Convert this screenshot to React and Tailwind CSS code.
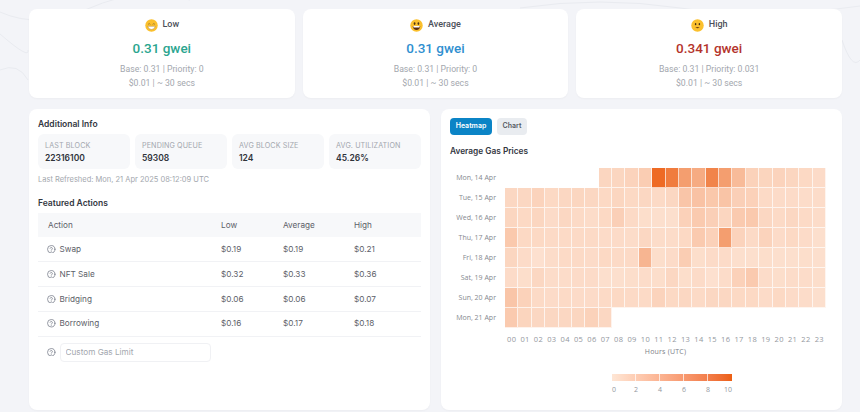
import React from "react";

const gasCards = [
  { id: "low", label: "Low", price: "0.31 gwei", color: "text-[#2ba58f]", base: "Base: 0.31 | Priority: 0" },
  { id: "avg", label: "Average", price: "0.31 gwei", color: "text-[#2f8fd0]", base: "Base: 0.31 | Priority: 0" },
  { id: "high", label: "High", price: "0.341 gwei", color: "text-[#b4342c]", base: "Base: 0.31 | Priority: 0.031" },
];

const stats = [
  ["LAST BLOCK", "22316100"],
  ["PENDING QUEUE", "59308"],
  ["AVG BLOCK SIZE", "124"],
  ["AVG. UTILIZATION", "45.26%"],
];

const actions = [
  ["Swap", "$0.19", "$0.19", "$0.21"],
  ["NFT Sale", "$0.32", "$0.33", "$0.36"],
  ["Bridging", "$0.06", "$0.06", "$0.07"],
  ["Borrowing", "$0.16", "$0.17", "$0.18"],
];

const days = ["Mon, 14 Apr", "Tue, 15 Apr", "Wed, 16 Apr", "Thu, 17 Apr", "Fri, 18 Apr", "Sat, 19 Apr", "Sun, 20 Apr", "Mon, 21 Apr"];

// null = no data for that hour
const heat = [
  [null, null, null, null, null, null, null, 1.7, 1.7, 1.9, 2.4, 10, 8.6, 6, 5, 8, 6, 3.8, 2, 1.8, 1.9, 1.7, 1.5, 1.3],
  [1.6, 1.6, 1.9, 1.5, 1.6, 1.7, 1.6, 1.5, 1.7, 1.5, 1.6, 1.4, 1.6, 3, 3.2, 2.8, 3.1, 2.2, 2.1, 1.4, 1.3, 1.3, 1.2, 1.2],
  [1.7, 1.5, 1.7, 1.3, 1.6, 1.4, 1.2, 1.5, 2.2, 1.4, 1.1, 1, 1, 2.1, 2.6, 2.2, 1.7, 2.6, 2.7, 1.6, 1.4, 1.6, 1.4, 1.2],
  [2.7, 1.5, 1.5, 1.4, 1.4, 1.4, 1.4, 1.3, 1.3, 1.2, 1.6, 1.2, 1.2, 1.5, 2.6, 2.1, 6, 1.9, 1.4, 1.9, 1.3, 1.5, 1.3, 1],
  [1.7, 1.3, 0.9, 1.2, 1.4, 1.4, 1.3, 1.5, 1.4, 1.4, 4.2, 1.1, 1.3, 2.4, 1.1, 1.3, 1.3, 1, 1, 1.1, 1, 1, 1.1, 1],
  [1.3, 1.1, 1.6, 1.2, 1.2, 1.3, 1.3, 1, 1, 1.1, 1.2, 1.1, 1.6, 1.1, 1.3, 0.9, 1.2, 2.1, 2.6, 1.2, 1.1, 1.2, 1.2, 1.1],
  [3, 2, 1.4, 1.3, 1.4, 1.3, 1.3, 1.4, 1.5, 1.4, 1.4, 1.9, 1.5, 1.6, 1.4, 1.6, 1.6, 1.5, 1.5, 1.3, 1.5, 1.3, 1.2, 1],
  [2.6, 1.8, 1.6, 1.6, 1.6, 1.7, 2, 1.6, null, null, null, null, null, null, null, null, null, null, null, null, null, null, null, null],
];

const hours = Array.from({ length: 24 }, (_, i) => String(i).padStart(2, "0"));

// white-ish peach up to deep orange, same ramp as the legend
function heatColor(v) {
  const t = v / 10;
  const r = Math.round(254 + (238 - 254) * t);
  const g = Math.round(236 + (106 - 236) * t);
  const b = Math.round(224 + (36 - 224) * t);
  return `rgb(${r},${g},${b})`;
}

function Face({ type }) {
  return (
    <svg viewBox="0 0 24 24" className="w-[13px] h-[13px] shrink-0">
      <circle cx="12" cy="12" r="11.5" fill="#fbc02d" />
      {type === "low" && (
        <>
          <path d="M5.5 10 Q8 7 10 10 M14 10 Q16 7 18.5 10" stroke="#8a6a30" strokeWidth="1.3" fill="none" />
          <path d="M5 13.5 H19 Q17 19.5 12 19.5 Q7 19.5 5 13.5Z" fill="#fff" stroke="#a07c3a" strokeWidth="0.8" />
        </>
      )}
      {type === "avg" && (
        <>
          <ellipse cx="8.5" cy="8.5" rx="1.6" ry="2.4" fill="#4a3214" />
          <ellipse cx="15.5" cy="8.5" rx="1.6" ry="2.4" fill="#4a3214" />
          <path d="M5 13 H19 Q18 20.5 12 20.5 Q6 20.5 5 13Z" fill="#5b2c0e" />
          <path d="M6 13 H18 L17.4 15.5 H6.6Z" fill="#fff" />
        </>
      )}
      {type === "high" && (
        <>
          <ellipse cx="8.5" cy="9.5" rx="1.4" ry="2" fill="#4a3214" />
          <ellipse cx="15.5" cy="9.5" rx="1.4" ry="2" fill="#4a3214" />
          <path d="M8 16 Q12 13.5 16 16 Q12 17.8 8 16Z" fill="#6d3a12" />
        </>
      )}
    </svg>
  );
}

function HelpIcon() {
  return (
    <svg viewBox="0 0 24 24" fill="none" stroke="#6b7280" strokeWidth="2" strokeLinecap="round" className="w-[8.5px] h-[8.5px] shrink-0">
      <circle cx="12" cy="12" r="10.5" />
      <path d="M8.8 9.2a3.3 3.3 0 0 1 6.4 1c0 2.2-3.2 2.6-3.2 4.2" />
      <path d="M12 18h.01" />
    </svg>
  );
}

export default function App() {
  return (
    <div className="relative w-[860px] h-[412px] overflow-hidden bg-[#f3f4f8] font-['Inter',sans-serif]">
      {/* faint contour lines behind the cards */}
      <svg className="absolute inset-0 w-full h-full" viewBox="0 0 860 412" fill="none" stroke="#e9ebf0" strokeWidth="1">
        <path d="M0 12 Q40 30 90 8 T190 0" />
        <path d="M0 34 Q30 60 28 50" />
        <path d="M520 8 Q600 -4 680 8 T860 6" />
        <path d="M842 40 Q852 70 860 60" />
        <path d="M0 70 Q18 62 28 80" />
      </svg>
      <div className="relative flex flex-col gap-[11px] pl-[29px] pr-[18px] pt-[9px]">
        <div className="grid grid-cols-3 gap-2">
          {gasCards.map((c) => (
            <div key={c.id} className="h-[89px] rounded-lg bg-white shadow-[0_1px_2px_rgba(0,0,0,0.03)] pt-[9px] flex flex-col items-center font-['Roboto',sans-serif]">
              <div className="flex items-center gap-[5px] h-[14px]">
                <Face type={c.id} />
                <span className="text-[9px] font-medium text-[#4b4f58]">{c.label}</span>
              </div>
              <div className={`mt-[7px] text-[13.5px] leading-[18px] font-medium ${c.color}`}>{c.price}</div>
              <div className="mt-[6px] text-[8.7px] leading-[13.5px] text-[#a3a7ae] text-center">
                <div>{c.base}</div>
                <div>$0.01 | ~ 30 secs</div>
              </div>
            </div>
          ))}
        </div>

        <div className="grid grid-cols-2 gap-[11px]">
          <div className="h-[301px] rounded-lg bg-white shadow-[0_1px_2px_rgba(0,0,0,0.03)] px-[9px] pt-[9px]">
            <h2 className="text-[8.5px] leading-[12px] font-semibold text-[#33373f]">Additional Info</h2>
            <div className="mt-[4px] grid grid-cols-4 gap-[5px]">
              {stats.map(([k, v]) => (
                <div key={k} className="h-[35px] rounded-md bg-[#f7f8fa] pl-[7px] pt-[6px]">
                  <div className="text-[7.2px] leading-[12px] tracking-[0.1px] text-[#a3a7ae]">{k}</div>
                  <div className="text-[8.5px] leading-[12px] font-semibold text-[#2f333a]">{v}</div>
                </div>
              ))}
            </div>
            <p className="mt-[6px] text-[7.5px] leading-[10px] text-[#a3a7ae]">Last Refreshed: Mon, 21 Apr 2025 08:12:09 UTC</p>
            <h2 className="mt-[12px] text-[8.5px] leading-[12px] font-semibold text-[#33373f]">Featured Actions</h2>
            <table className="mt-[4px] w-full table-fixed text-[8.2px] text-[#5c6068]">
              <thead>
                <tr className="h-[24px] bg-[#f7f8fa]">
                  <th className="w-[173px] pl-[10px] text-left font-normal">Action</th>
                  <th className="w-[62px] pl-[10px] text-left font-normal">Low</th>
                  <th className="w-[71px] pl-[10px] text-left font-normal">Average</th>
                  <th className="pl-[10px] text-left font-normal">High</th>
                </tr>
              </thead>
              <tbody>
                {actions.map(([name, low, avg, high]) => (
                  <tr key={name} className="h-[24.75px] border-b border-[#f1f2f5]">
                    <td className="pl-[9px]">
                      <div className="flex items-center gap-[4px]">
                        <HelpIcon />
                        <span>{name}</span>
                      </div>
                    </td>
                    <td className="pl-[10px]">{low}</td>
                    <td className="pl-[10px]">{avg}</td>
                    <td className="pl-[10px]">{high}</td>
                  </tr>
                ))}
              </tbody>
            </table>
            <div className="mt-[6px] pl-[9px] flex items-center gap-[4px]">
              <HelpIcon />
              <input
                placeholder="Custom Gas Limit"
                className="w-[151px] h-[19px] rounded border border-[#f0f1f4] px-[5px] text-[8.2px] placeholder:text-[#a3a7ae] outline-none"
              />
            </div>
          </div>

          <div className="h-[301px] rounded-lg bg-white shadow-[0_1px_2px_rgba(0,0,0,0.03)] pl-[9px] pr-[16px] pt-[9px]">
            <div className="flex gap-[5px]">
              <button className="w-[42px] h-[17px] rounded bg-[#0b84c6] text-[7px] font-semibold text-white">Heatmap</button>
              <button className="w-[30px] h-[17px] rounded bg-[#e9ecf0] text-[7px] font-semibold text-[#555a63]">Chart</button>
            </div>
            <h2 className="mt-[10px] text-[8.3px] leading-[12px] font-semibold text-[#33373f]">Average Gas Prices</h2>
            <div className="mt-[11px] flex font-['Open_Sans',sans-serif]">
              <div className="w-[46px] flex flex-col text-right text-[7px] text-[#85898f]">
                {days.map((d) => (
                  <div key={d} className="h-5 leading-5">{d}</div>
                ))}
              </div>
              <div className="ml-[9px] w-[321px]">
                <div className="grid grid-cols-[repeat(24,minmax(0,1fr))] auto-rows-[20px]">
                  {heat.flatMap((row, y) =>
                    row.map((v, x) => (
                      <div key={`${y}-${x}`} className={v === null ? "" : "border-r border-b border-white/70"} style={v === null ? undefined : { backgroundColor: heatColor(v) }} />
                    ))
                  )}
                </div>
                <div className="mt-[6px] grid grid-cols-[repeat(24,minmax(0,1fr))] text-center text-[7.5px] leading-[10px] tracking-[0.3px] text-[#93979e]">
                  {hours.map((h) => (
                    <span key={h}>{h}</span>
                  ))}
                </div>
                <div className="mt-[3px] text-center text-[7px] leading-[10px] tracking-[0.2px] text-[#7d8189]">Hours (UTC)</div>
                <div className="mt-[17px] ml-[107px] w-[120px]">
                  <div className="relative h-[7px] bg-gradient-to-r from-[#fee6d5] to-[#ec5f12]">
                    <div className="absolute inset-0 grid grid-cols-5">
                      <span className="border-r border-white/70" />
                      <span className="border-r border-white/70" />
                      <span className="border-r border-white/70" />
                      <span className="border-r border-white/70" />
                      <span />
                    </div>
                  </div>
                  <div className="mt-[4px] flex text-center text-[7px] leading-[10px] text-[#93979e]">
                    <span className="w-[12px] text-left">0</span>
                    <span className="w-[24px]">2</span>
                    <span className="w-[24px]">4</span>
                    <span className="w-[24px]">6</span>
                    <span className="w-[24px]">8</span>
                    <span className="w-[12px] text-right whitespace-nowrap">10</span>
                  </div>
                </div>
              </div>
            </div>
          </div>
        </div>
      </div>
    </div>
  );
}
